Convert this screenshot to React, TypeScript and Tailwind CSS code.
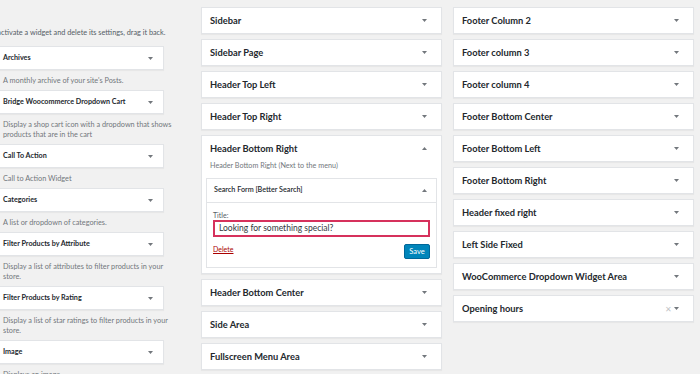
import React from "react";

const font = { fontFamily: "Lato, 'Liberation Sans', sans-serif" };

function Down({ className = "" }: { className?: string }) {
  return (
    <svg width="5" height="3" viewBox="0 0 5 3" className={className}>
      <path d="M0 0 L5 0 L2.5 3 Z" fill="#72777c" />
    </svg>
  );
}
function Up({ className = "" }: { className?: string }) {
  return (
    <svg width="5" height="3" viewBox="0 0 5 3" className={className}>
      <path d="M0 3 L5 3 L2.5 0 Z" fill="#72777c" />
    </svg>
  );
}

const available: { title: string; desc: string[] }[] = [
  { title: "Archives", desc: ["A monthly archive of your site's Posts."] },
  {
    title: "Bridge Woocommerce Dropdown Cart",
    desc: ["Display a shop cart icon with a dropdown that shows", "products that are in the cart"],
  },
  { title: "Call To Action", desc: ["Call to Action Widget"] },
  { title: "Categories", desc: ["A list or dropdown of categories."] },
  {
    title: "Filter Products by Attribute",
    desc: ["Display a list of attributes to filter products in your", "store."],
  },
  {
    title: "Filter Products by Rating",
    desc: ["Display a list of star ratings to filter products in your", "store."],
  },
  { title: "Image", desc: ["Displays an image."] },
];

function LeftBox({ title, desc }: { title: string; desc: string[] }) {
  return (
    <div>
      <div className="h-[24px] bg-white border border-[#e2e4e7] shadow-[0_1px_1px_rgba(0,0,0,0.04)] flex items-center justify-between pl-[22px] pr-[10px]">
        <span className="text-[7.2px] font-bold text-[#23282d]">{title}</span>
        <Down />
      </div>
      <div className="pl-[23px] pt-[6px] pb-[4px] text-[7.3px] leading-[10px] text-[#72777c] whitespace-nowrap">
        {desc.map((d, i) => (
          <div key={i}>{d}</div>
        ))}
      </div>
    </div>
  );
}

function Box({ title, x }: { title: string; x?: boolean }) {
  return (
    <div className="h-[27px] bg-white border border-[#e2e4e7] shadow-[0_1px_1px_rgba(0,0,0,0.04)] flex items-center justify-between pl-[8px] pr-[14px]">
      <span className="text-[9.3px] font-bold text-[#23282d]">{title}</span>
      <div className="flex items-center gap-[2px]">
        {x && <span className="text-[8px] leading-none text-[#c3c4c7]">✕</span>}
        <Down />
      </div>
    </div>
  );
}

function Expanded() {
  return (
    <div className="bg-white border border-[#e2e4e7] shadow-[0_1px_1px_rgba(0,0,0,0.04)] px-[4px] pb-[5px]">
      <div className="h-[25px] flex items-center justify-between pl-[4px] pr-[10px]">
        <span className="text-[9.3px] font-bold text-[#23282d]">Header Bottom Right</span>
        <Up />
      </div>
      <div className="pl-[4px] text-[7.2px] leading-[10px] text-[#72777c] mb-[7px]">
        Header Bottom Right (Next to the menu)
      </div>
      <div className="border border-[#e2e4e7]">
        <div className="h-[24px] border-b border-[#e2e4e7] flex items-center justify-between pl-[7px] pr-[9px]">
          <span className="text-[7.2px] font-semibold text-[#23282d]">Search Form [Better Search]</span>
          <Up />
        </div>
        <div className="px-[6px] pt-[8px] pb-[8px]">
          <div className="text-[7px] leading-[9px] text-[#555d66]">Title:</div>
          <div className="h-[17px] border-2 border-[#d6315c] bg-white flex items-center pl-[4px] text-[8.5px] text-[#32373c]">
            Looking for something special?
          </div>
          <div className="mt-[7px] h-[15px] flex items-center justify-between">
            <span className="text-[7px] text-[#a00] underline mb-[5px]">Delete</span>
            <div className="h-[15px] w-[26px] rounded-[2px] bg-[#0085ba] border border-[#006799] flex items-center justify-center text-[7.5px] text-white">
              Save
            </div>
          </div>
        </div>
      </div>
    </div>
  );
}

export default function App() {
  return (
    <div className="w-[700px] h-[374px] overflow-hidden bg-[#f1f1f1] flex items-start" style={font}>
      <div className="w-[184px] ml-[-20px] shrink-0 pt-[28px]">
        <div className="text-[7.3px] leading-[10px] text-[#555d66] whitespace-nowrap">
          To deactivate a widget and delete its settings, drag it back.
        </div>
        <div className="mt-[8px]">
          {available.map((a) => (
            <LeftBox key={a.title} {...a} />
          ))}
        </div>
      </div>
      <div className="w-[241px] ml-[37px] shrink-0 pt-[7px] flex flex-col gap-[5px]">
        {["Sidebar", "Sidebar Page", "Header Top Left", "Header Top Right"].map((t) => (
          <Box key={t} title={t} />
        ))}
        <Expanded />
        {["Header Bottom Center", "Side Area", "Fullscreen Menu Area"].map((t) => (
          <Box key={t} title={t} />
        ))}
      </div>
      <div className="w-[241px] ml-[11px] shrink-0 pt-[7px] flex flex-col gap-[5px]">
        {[
          "Footer Column 2",
          "Footer column 3",
          "Footer column 4",
          "Footer Bottom Center",
          "Footer Bottom Left",
          "Footer Bottom Right",
          "Header fixed right",
          "Left Side Fixed",
          "WooCommerce Dropdown Widget Area",
        ].map((t) => (
          <Box key={t} title={t} />
        ))}
        <Box title="Opening hours" x />
      </div>
    </div>
  );
}
